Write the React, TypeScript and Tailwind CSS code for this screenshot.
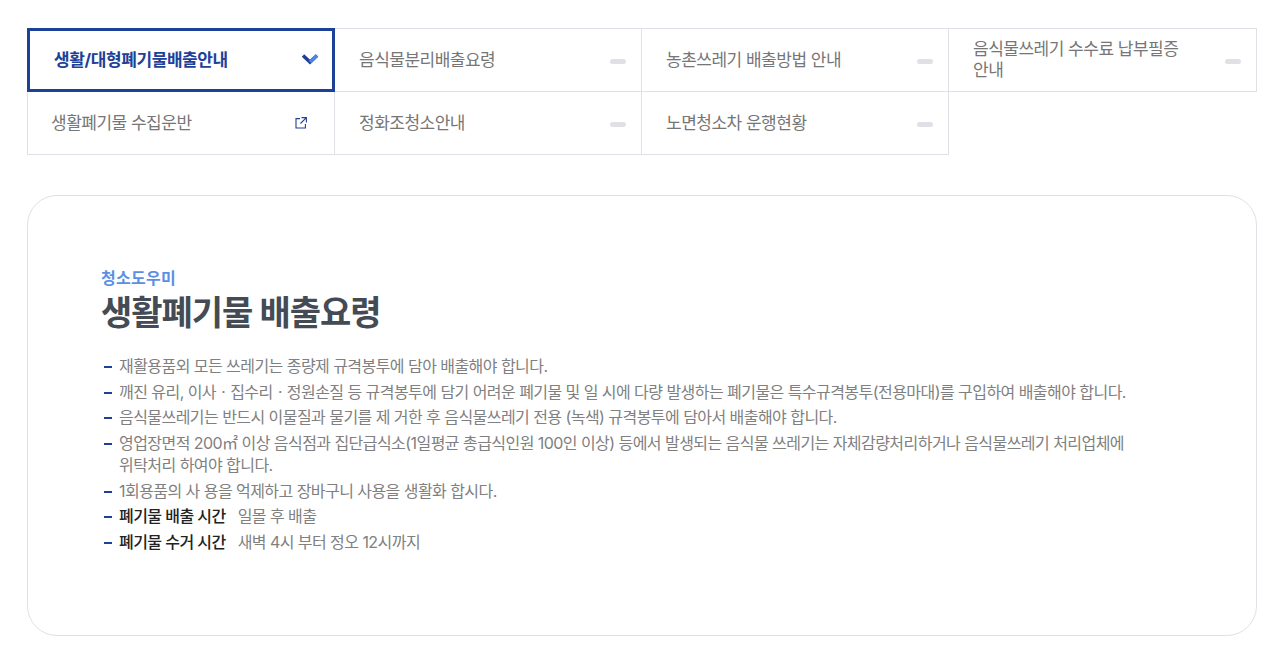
const font = 'font-["Inter","Noto_Sans_CJK_KR",sans-serif]';

const tabs = [
  { label: '생활/대형폐기물배출안내', active: true },
  { label: '음식물분리배출요령' },
  { label: '농촌쓰레기 배출방법 안내' },
  { label: '음식물쓰레기 수수료 납부필증 안내' },
  { label: '생활폐기물 수집운반', external: true },
  { label: '정화조청소안내' },
  { label: '노면청소차 운행현황' },
];

const Tab = ({ label, active, external }: { label: string; active?: boolean; external?: boolean }) => (
  <a
    className={`relative flex h-[63px] items-center justify-between border-r border-b border-[#dfe1e6] pr-[15px] ${
      external ? 'pl-[23px]' : 'pl-[24px]'
    } text-[17px] leading-[21px] tracking-[-0.5px]`}
  >
    {active && <span className="absolute -top-px -left-px h-[64px] w-[308px] border-[3px] border-[#1e4198]" />}
    <span className={`max-w-[215px] ${active ? 'pl-[2px] font-bold tracking-[-0.4px] text-[#1e4198]' : 'text-[#767676]'}`}>{label}</span>
    {active ? (
      <svg width="18" height="12" viewBox="0 0 18 12" className="mb-[2px]">
        <path d="M2 2.500 9 9l7-6.500" fill="none" stroke="#1e4198" strokeWidth="3.500" />
        <path d="M9 9l7-6.500" fill="none" stroke="#4d86e0" strokeWidth="3.500" />
      </svg>
    ) : external ? (
      <svg width="14" height="14" viewBox="0 0 14 14" className="mr-[11px] mb-[1px]" fill="none" stroke="#1e4198" strokeWidth="1.100">
        <path d="M6 2.600H2v9.400h9.400V8" />
        <path d="M7.500 1.600h4.900v4.900M12.400 1.600 6.500 7.500" />
      </svg>
    ) : (
      <span className="relative top-px h-[5px] w-4 rounded-full bg-[#dfe1e6]" />
    )}
  </a>
);

const Item = ({ children }: { children: React.ReactNode }) => (
  <li className="relative pl-[15px] before:absolute before:top-[11px] before:left-0 before:h-[2px] before:w-[8px] before:bg-[#1e4198]">
    {children}
  </li>
);

const App = () => (
  <div className={`${font} h-[650px] w-[1275px] overflow-hidden bg-white pt-[28px] pr-[18px] pl-[27px]`}>
    <div className="grid grid-cols-[308px_307px_307px_308px] border-t border-l-0 border-[#dfe1e6] [&>a:nth-child(4n+1)]:border-l">
      {tabs.map((tab) => (
        <Tab key={tab.label} {...tab} />
      ))}
    </div>

    <section className="mt-[40px] h-[441px] rounded-[30px] border border-[#dfe1e6] pt-[70px] pr-[122px] pl-[73px]">
      <p className="text-base leading-[24px] font-bold tracking-[0.3px] text-[#5b8fe6]">청소도우미</p>
      <h2 className="text-[34px] leading-[46px] font-bold tracking-[-1px] text-[#444b55]">생활폐기물 배출요령</h2>
      <ul className="mt-[19px] space-y-[3.200px] pl-[3px] text-base leading-[1.400] tracking-[-0.55px] text-[#808080]">
        <Item>재활용품외 모든 쓰레기는 종량제 규격봉투에 담아 배출해야 합니다.</Item>
        <Item>깨진 유리, 이사ㆍ집수리ㆍ정원손질 등 규격봉투에 담기 어려운 폐기물 및 일 시에 다량 발생하는 폐기물은 특수규격봉투(전용마대)를 구입하여 배출해야 합니다.</Item>
        <Item>음식물쓰레기는 반드시 이물질과 물기를 제 거한 후 음식물쓰레기 전용 (녹색) 규격봉투에 담아서 배출해야 합니다.</Item>
        <Item>영업장면적 200㎡ 이상 음식점과 집단급식소(1일평균 총급식인원 100인 이상) 등에서 발생되는 음식물 쓰레기는 자체감량처리하거나 음식물쓰레기 처리업체에 위탁처리 하여야 합니다.</Item>
        <Item>1회용품의 사 용을 억제하고 장바구니 사용을 생활화 합시다.</Item>
        <Item><b className="mr-3 font-medium text-[#222]">폐기물 배출 시간</b>일몰 후 배출</Item>
        <Item><b className="mr-3 font-medium text-[#222]">폐기물 수거 시간</b>새벽 4시 부터 정오 12시까지</Item>
      </ul>
    </section>
  </div>
);

export default App;
